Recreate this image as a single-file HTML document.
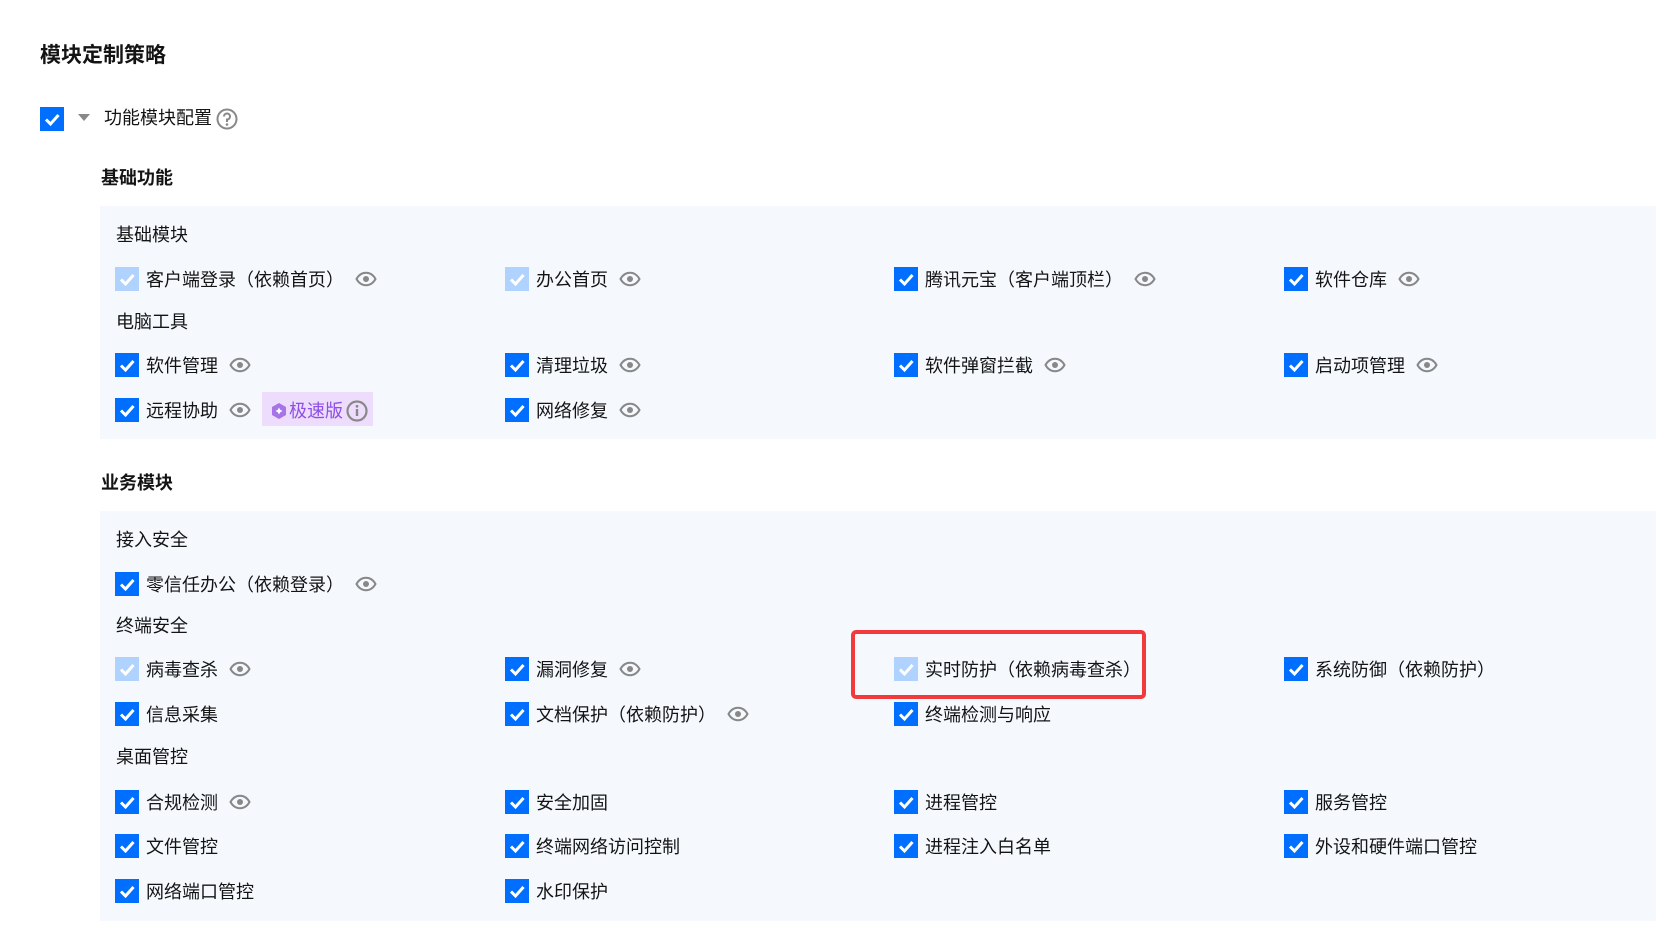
<!DOCTYPE html>
<html><head><meta charset="utf-8"><style>
*{margin:0;padding:0;box-sizing:border-box}
body{width:1656px;height:939px;background:#fff;position:relative;overflow:hidden;font-family:"Liberation Sans","Noto Sans CJK SC",sans-serif;color:#141414}
.a{position:absolute;white-space:nowrap}
.t{font-size:18px;line-height:24px}
.b{font-weight:bold}
.panel{position:absolute;left:100px;right:0;background:#f5f9fe}
.cb{position:absolute;width:24px;height:24px;background:#006eff}
.cb svg{position:absolute;left:0;top:0}
.item{position:absolute;height:24px;display:flex;align-items:center;font-size:18px;white-space:nowrap}
.item .c{width:24px;height:24px;background:#006eff;position:relative;margin-right:7px;flex:none}
.item .c.d{background:#b0d2ff}
.eye{margin-left:11px;display:inline-block;width:22px;height:16px}
</style></head><body>
<div class="a b" style="left:40px;top:44px;font-size:21px;line-height:24px">模块定制策略</div>
<div class="cb" style="left:40px;top:107px"><svg width="24" height="24"><path d="M6 12.5l4.5 4.5 8-9" stroke="#fff" stroke-width="3" fill="none"/></svg></div>
<svg class="a" style="left:78px;top:114px" width="12" height="8"><path d="M0 0h12L6 7z" fill="#888"/></svg>
<div class="a t" style="left:104px;top:106px">功能模块配置</div>
<svg class="a" style="left:216px;top:108px" width="22" height="22"><circle cx="11" cy="11" r="9.5" stroke="#888" stroke-width="2" fill="none"/><path d="M8 8.5a3 3 0 1 1 3 3v2.5" stroke="#888" stroke-width="2" fill="none"/><circle cx="11" cy="16.5" r="1.3" fill="#888"/></svg>
<div class="a t b" style="left:101px;top:166px">基础功能</div>
<div class="panel" style="top:206px;height:233px"></div>
<div class="a b t" style="left:101px;top:471px">业务模块</div>
<div class="panel" style="top:511px;height:410px"></div>
<div class="a t" style="left:116px;top:223px">基础模块</div>
<div class="a t" style="left:116px;top:310px">电脑工具</div>
<div class="a t" style="left:116px;top:528px">接入安全</div>
<div class="a t" style="left:116px;top:614px">终端安全</div>
<div class="a t" style="left:116px;top:745px">桌面管控</div>
<div style="position:absolute;left:851px;top:630px;width:295px;height:69px;border:4px solid #f23a3c;border-radius:5px"></div>
<div id="items"></div>
<div class="a" style="left:262px;top:392px;width:111px;height:34px;background:#eddcfb"></div>
<svg class="a" style="left:270px;top:402px" width="18" height="18"><path d="M9 1l7 4v8l-7 4-7-4V5z" fill="#a674e6"/><path d="M9 5.5l1.2 2.3 2.3 1.2-2.3 1.2L9 12.5l-1.2-2.3L5.5 9l2.3-1.2z" fill="#fff"/></svg>
<div class="a t" style="left:289px;top:399px;color:#8d4fe6">极速版</div>
<svg class="a" style="left:346px;top:400px" width="22" height="22"><circle cx="11" cy="11" r="9.5" stroke="#888" stroke-width="2.2" fill="none"/><rect x="9.8" y="9" width="2.4" height="7" fill="#888"/><circle cx="11" cy="6.3" r="1.4" fill="#888"/></svg>
<script>
var eye='<svg class="eye" viewBox="0 0 22 16"><path d="M1.5 8C4 3.5 7.5 1.8 11 1.8S18 3.5 20.5 8C18 12.5 14.5 14.2 11 14.2S4 12.5 1.5 8z" stroke="#888" stroke-width="2" fill="none"/><circle cx="11" cy="8" r="3" fill="#888"/></svg>';
var X=[115,505,894,1284];
var rows=[
[279,[["客户端登录（依赖首页）",1,1],["办公首页",1,1],["腾讯元宝（客户端顶栏）",0,1],["软件仓库",0,1]]],
[365,[["软件管理",0,1],["清理垃圾",0,1],["软件弹窗拦截",0,1],["启动项管理",0,1]]],
[410,[["远程协助",0,1],["网络修复",0,1]]],
[584,[["零信任办公（依赖登录）",0,1]]],
[669,[["病毒查杀",1,1],["漏洞修复",0,1],["实时防护（依赖病毒查杀）",1,0],["系统防御（依赖防护）",0,0]]],
[714,[["信息采集",0,0],["文档保护（依赖防护）",0,1],["终端检测与响应",0,0]]],
[802,[["合规检测",0,1],["安全加固",0,0],["进程管控",0,0],["服务管控",0,0]]],
[846,[["文件管控",0,0],["终端网络访问控制",0,0],["进程注入白名单",0,0],["外设和硬件端口管控",0,0]]],
[891,[["网络端口管控",0,0],["水印保护",0,0]]]];
var h='';
rows.forEach(function(r){r[1].forEach(function(it,i){
h+='<div class="item" style="left:'+X[i]+'px;top:'+(r[0]-12)+'px"><span class="c'+(it[1]?' d':'')+'"><svg width="24" height="24"><path d="M6 12.5l4.5 4.5 8-9" stroke="#fff" stroke-width="3" fill="none"/></svg></span>'+it[0]+(it[2]?eye:'')+'</div>';});});
document.getElementById('items').innerHTML=h;
</script>
</body></html>
